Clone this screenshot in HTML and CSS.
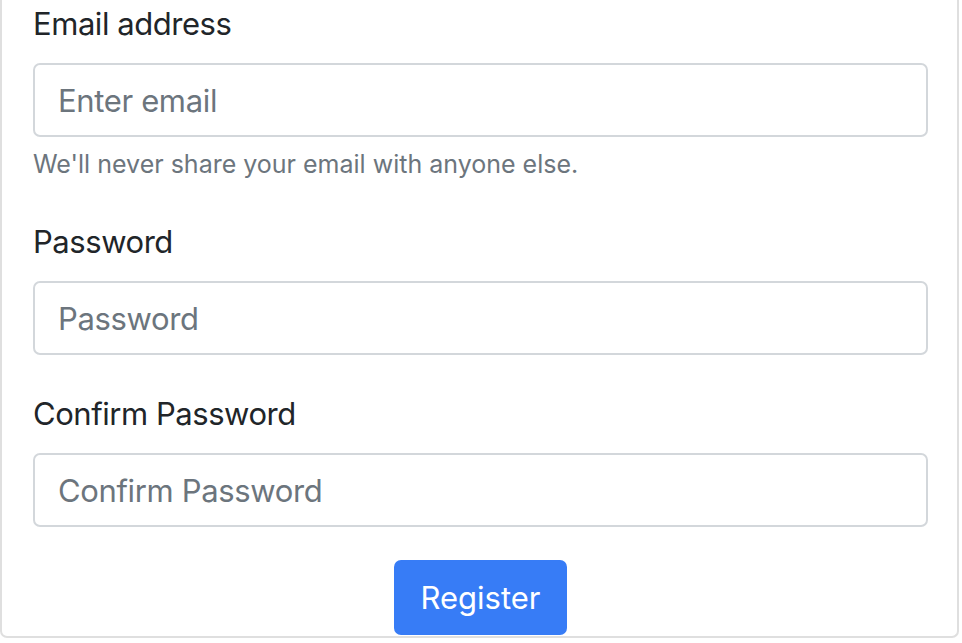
FILE: index.html
```html
<!DOCTYPE html>
<html lang="en">
<head>
<meta charset="utf-8">
<title>Register</title>
<link rel="stylesheet" href="styles.css">
</head>
<body>
<div class="card">
  <form class="card-body">
    <div class="form-group">
      <label class="form-label" for="email">Email address</label>
      <input class="form-control" type="email" id="email" placeholder="Enter email">
      <small class="form-text">We'll never share your email with anyone else.</small>
    </div>
    <div class="form-group">
      <label class="form-label" for="password">Password</label>
      <input class="form-control" type="password" id="password" placeholder="Password">
    </div>
    <div class="form-group form-group-last">
      <label class="form-label" for="confirm">Confirm Password</label>
      <input class="form-control" type="password" id="confirm" placeholder="Confirm Password">
    </div>
    <div class="actions">
      <button class="btn-primary" type="submit">Register</button>
    </div>
  </form>
</div>
</body>
</html>
```
FILE: styles.css
```css
html, body {
  margin: 0;
  padding: 0;
  background: #ffffff;
}

body {
  font-family: Inter, "Noto Sans", "Liberation Sans", sans-serif;
  color: #212529;
}

.card {
  width: 959px;
  box-sizing: border-box;
  border: 2px solid #dfdfdf;
  border-top: 0;
  border-radius: 0 0 7px 7px;
  background: #fff;
}

.card-body {
  padding: 0 29px 1px 31px;
  margin: 0;
}

.form-group {
  margin-bottom: 35px;
}

.form-group-last {
  margin-bottom: 33px;
}

.form-label {
  display: block;
  font-size: 31px;
  line-height: 47px;
  letter-spacing: -0.45px;
  margin-bottom: 16px;
  color: #212529;
}

.form-control {
  display: block;
  width: 100%;
  box-sizing: border-box;
  height: 74px;
  padding: 0 23px;
  font-family: inherit;
  font-size: 31px;
  letter-spacing: -0.35px;
  color: #495057;
  background: #fff;
  border: 2px solid #d3d7db;
  border-radius: 7px;
  outline: none;
}

.form-control::placeholder {
  color: #6c757d;
  opacity: 1;
}

.form-text {
  display: block;
  margin-top: 8px;
  font-size: 25px;
  line-height: 38px;
  color: #6c757d;
}

.actions {
  display: flex;
  justify-content: center;
}

.btn-primary {
  height: 75px;
  padding: 0 26px;
  font-family: inherit;
  font-size: 31px;
  color: #fff;
  background: #377cf6;
  border: 0;
  border-radius: 7px;
}
```
